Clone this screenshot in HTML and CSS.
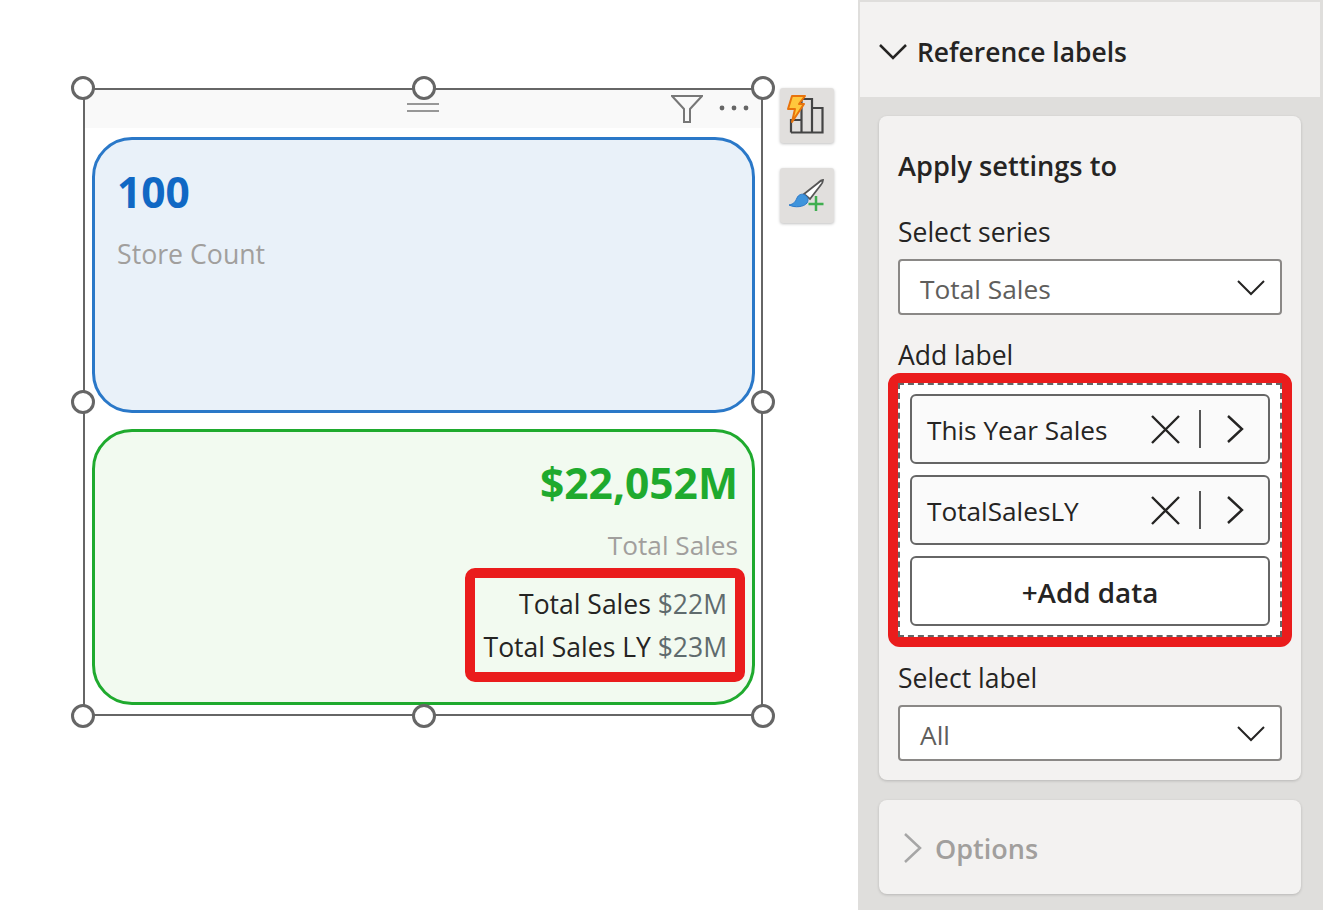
FILE: index.html
```html
<!DOCTYPE html>
<html lang="en">
<head>
    <meta charset="UTF-8">
    <title>Reference labels</title>
    <link rel="stylesheet" href="styles.css">
</head>
<body>

    <!-- Report canvas with the selected card visual -->
    <div class="canvas">
        <div class="visual">
            <div class="visual-header">
                <svg class="grip" width="32" height="9" viewBox="0 0 32 9"><path d="M0 1h32M0 8h32" stroke="#777" stroke-width="1.5"/></svg>
                <svg class="filter-icon" width="32" height="28" viewBox="0 0 32 28"><path d="M1 1h30L19 14v13h-6V14z" fill="none" stroke="#777" stroke-width="2"/></svg>
                <svg class="more-icon" width="30" height="6" viewBox="0 0 30 6"><circle cx="3" cy="3" r="2.400" fill="#666"/><circle cx="15" cy="3" r="2.400" fill="#666"/><circle cx="27" cy="3" r="2.400" fill="#666"/></svg>
            </div>
            <div class="visual-body">
                <div class="kpi kpi-blue">
                    <div class="kpi-value">100</div>
                    <div class="kpi-label">Store Count</div>
                </div>
                <div class="kpi kpi-green">
                    <div class="kpi-value">$22,052M</div>
                    <div class="kpi-label">Total Sales</div>
                    <div class="ref-labels">
                        <div>Total Sales <span class="ref-value">$22M</span></div>
                        <div>Total Sales LY <span class="ref-value">$23M</span></div>
                    </div>
                </div>
            </div>

            <!-- Selection handles -->
            <span class="handle h-tl"></span>
            <span class="handle h-tc"></span>
            <span class="handle h-tr"></span>
            <span class="handle h-ml"></span>
            <span class="handle h-mr"></span>
            <span class="handle h-bl"></span>
            <span class="handle h-bc"></span>
            <span class="handle h-br"></span>
        </div>

        <div class="side-tools">
            <div class="tool-btn">
                <svg width="54" height="55" viewBox="0 0 54 55">
                    <path d="M11 44.500V32h10.500M21.500 44.500V11h10.500v33.500M32 20h10.500v24.500H11" fill="none" stroke="#444" stroke-width="2.200"/>
                    <path d="M12 8h13l-6 8h5L12 34l3-13H8z" fill="#ffc83d" stroke="#e8730c" stroke-width="2" stroke-linejoin="round"/>
                </svg>
            </div>
            <div class="tool-btn">
                <svg width="54" height="55" viewBox="0 0 54 55">
                    <path d="M38 15c2-2 4-3 5-3 0 2-1 4-3 6L30 31l-6-5z" fill="#fff" stroke="#555" stroke-width="1.800"/>
                    <path d="M9 37c5-1 6-3 8-7 1-3 5-5 8-3 3 2 4 5 2 8-3 4-12 5-18 2z" fill="#3f94dc" stroke="#2a78c8"/>
                    <path d="M36 28v15M28.500 36h15" stroke="#3fae4f" stroke-width="2.500"/>
                </svg>
            </div>
        </div>
    </div>

    <!-- Format pane -->
    <div class="pane">
        <div class="pane-header">
            <svg class="chevron" width="30" height="18" viewBox="0 0 30 18"><path d="M2 2l13 13L28 2" fill="none" stroke="#252423" stroke-width="2.500"/></svg>
            Reference labels
        </div>

        <div class="pane-card settings">
            <h2>Apply settings to</h2>

            <label class="field-label">Select series</label>
            <div class="dropdown">
                <span class="dropdown-text">Total Sales</span>
                <svg width="30" height="17" viewBox="0 0 30 17"><path d="M2 2l13 13L28 2" fill="none" stroke="#252423" stroke-width="2"/></svg>
            </div>

            <label class="field-label add-label">Add label</label>
            <div class="highlight">
                <div class="drop-zone">
                    <div class="chip">
                        <span class="chip-name">This Year Sales</span>
                        <svg class="chip-icons" width="100" height="38" viewBox="0 0 100 38"><path d="M2 6l27 27M29 6L2 33" stroke="#252423" stroke-width="2.400" fill="none"/><path d="M50 0v38" stroke="#555" stroke-width="2"/><path d="M78 6l14 13-14 13" stroke="#252423" stroke-width="2.400" fill="none"/></svg>
                    </div>
                    <div class="chip">
                        <span class="chip-name">TotalSalesLY</span>
                        <svg class="chip-icons" width="100" height="38" viewBox="0 0 100 38"><path d="M2 6l27 27M29 6L2 33" stroke="#252423" stroke-width="2.400" fill="none"/><path d="M50 0v38" stroke="#555" stroke-width="2"/><path d="M78 6l14 13-14 13" stroke="#252423" stroke-width="2.400" fill="none"/></svg>
                    </div>
                    <div class="add-data">+Add data</div>
                </div>
            </div>

            <label class="field-label select-label">Select label</label>
            <div class="dropdown">
                <span class="dropdown-text">All</span>
                <svg width="30" height="17" viewBox="0 0 30 17"><path d="M2 2l13 13L28 2" fill="none" stroke="#252423" stroke-width="2"/></svg>
            </div>
        </div>

        <div class="pane-card options">
            <svg width="20" height="32" viewBox="0 0 20 32"><path d="M2 2l15 14L2 30" fill="none" stroke="#a6a6a6" stroke-width="2.500"/></svg>
            Options
        </div>
    </div>

</body>
</html>
```

FILE: styles.css
```css
/* whole page, canvas on the left and format pane on the right */
body {
    display: flex;
    margin: 0;
    height: 910px;
    overflow: hidden;
    background-color: #fff;
    color: #252423;
    font-family: "Open Sans", "Noto Sans", sans-serif;
}

.canvas {
    display: flex;
    align-items: flex-start;
    gap: 17px;
    width: 858px;
    flex-shrink: 0;
    padding: 88px 0 0 83px;
    box-sizing: border-box;
}

/* selected visual */
.visual {
    position: relative;
    width: 680px;
    height: 628px;
    box-sizing: border-box;
    border: 2px solid #666;
}

.visual-header {
    display: flex;
    align-items: flex-start;
    height: 38px;
    background-color: #f9f9f9;
    position: relative;
}

.grip {
    position: absolute;
    left: 322px;
    top: 13px;
}

.filter-icon {
    margin: 5px 0 0 586px;
}

.more-icon {
    margin: 15px 0 0 16px;
}

.visual-body {
    display: flex;
    flex-direction: column;
    gap: 16px;
    padding: 9px 6px 0 7px;
}

.kpi {
    height: 276px;
    box-sizing: border-box;
    border: 3px solid;
    border-radius: 40px;
}

.kpi-blue {
    padding: 25px 0 0 22px;
    background-color: #e9f1f9;
    border-color: #2a78c8;
}

.kpi-green {
    display: flex;
    flex-direction: column;
    align-items: flex-end;
    padding: 24px 0 0;
    background-color: #f2faf0;
    border-color: #1faa2e;
}

.kpi-value {
    font-size: 42.500px;
    line-height: 54px;
    font-weight: 700;
}

.kpi-blue .kpi-value {
    color: #1068c4;
}

.kpi-green .kpi-value {
    color: #1faa2e;
    margin-right: 14px;
}

.kpi-label {
    font-size: 26.700px;
    line-height: 36px;
    margin-top: 17px;
    color: #a19f9d;
}

.kpi-green .kpi-label {
    margin-top: 17px;
    margin-right: 14px;
    font-size: 26.200px;
}

/* red box round the reference labels */
.ref-labels {
    margin: 5px 7px 0 0;
    width: 280px;
    height: 114px;
    box-sizing: border-box;
    padding: 5px 8px 0 0;
    border: 10px solid #ea1c1c;
    border-radius: 10px;
    text-align: right;
    font-size: 26.500px;
    line-height: 43px;
}

.ref-value {
    color: #5f6b6d;
}

/* selection handles */
.handle {
    position: absolute;
    width: 18px;
    height: 18px;
    border: 3px solid #666;
    border-radius: 50%;
    background-color: #fff;
}

.h-tl { left: -14px; top: -14px; }
.h-tc { left: 327px; top: -14px; }
.h-tr { left: 666px; top: -14px; }
.h-ml { left: -14px; top: 300px; }
.h-mr { left: 666px; top: 300px; }
.h-bl { left: -14px; top: 614px; }
.h-bc { left: 327px; top: 614px; }
.h-br { left: 666px; top: 614px; }

/* buttons beside the visual */
.side-tools {
    display: flex;
    flex-direction: column;
    gap: 25px;
}

.tool-btn {
    width: 54px;
    height: 55px;
    background-color: #e1dfdd;
    border-radius: 3px;
    box-shadow: 0 1px 3px rgba(0, 0, 0, 0.25);
}

.tool-btn svg {
    display: block;
}

/* format pane */
.pane {
    width: 465px;
    flex-shrink: 0;
    box-sizing: border-box;
    padding: 2px 3px 0 2px;
    background-color: #dfdedc;
}

.pane-header {
    display: flex;
    align-items: center;
    gap: 9px;
    height: 95px;
    padding: 4px 0 0 18px;
    box-sizing: border-box;
    background-color: #f3f2f1;
    font-size: 26.400px;
    font-weight: 600;
}

.pane-card {
    margin: 19px 19px 0;
    background-color: #f3f2f1;
    border-radius: 8px;
    box-shadow: 0 1px 3px rgba(0, 0, 0, 0.18);
}

.settings {
    height: 664px;
    box-sizing: border-box;
    padding: 30px 19px 0;
}

h2 {
    margin: 0 0 28px;
    font-size: 27.200px;
    line-height: 40px;
    font-weight: 600;
}

.field-label {
    display: block;
    font-size: 26.500px;
    line-height: 36px;
    margin-bottom: 9px;
}

.dropdown {
    display: flex;
    align-items: center;
    justify-content: space-between;
    height: 56px;
    box-sizing: border-box;
    padding: 0 14px 0 20px;
    border: 2px solid #8a8886;
    border-radius: 4px;
    background-color: #fff;
    font-size: 26.300px;
    color: #605e5c;
}

.dropdown-text {
    padding-top: 3px;
}

.add-label {
    margin: 22px 0 0;
}

.highlight {
    margin: 0 -10px;
    border: 10px solid #ea1c1c;
    border-radius: 12px;
}

.drop-zone {
    display: flex;
    flex-direction: column;
    gap: 11px;
    height: 254px;
    box-sizing: border-box;
    padding: 9px 10px;
    border: 2px dashed #666;
    background-color: #fff;
}

.chip {
    display: flex;
    align-items: center;
    justify-content: space-between;
    height: 70px;
    box-sizing: border-box;
    padding: 0 18px 0 15px;
    border: 2px solid #666;
    border-radius: 6px;
    background-color: #fafafa;
    font-size: 26.200px;
}

.chip-name {
    padding-top: 2px;
}

.add-data {
    height: 70px;
    box-sizing: border-box;
    border: 2px solid #666;
    border-radius: 6px;
    text-align: center;
    font-size: 27.800px;
    font-weight: 600;
    line-height: 68px;
}

.select-label {
    margin-top: 13px;
}

.options {
    display: flex;
    align-items: center;
    gap: 12px;
    height: 94px;
    margin-top: 20px;
    box-sizing: border-box;
    padding: 2px 0 0 24px;
    font-size: 27px;
    font-weight: 600;
    color: #a19f9d;
}
```
